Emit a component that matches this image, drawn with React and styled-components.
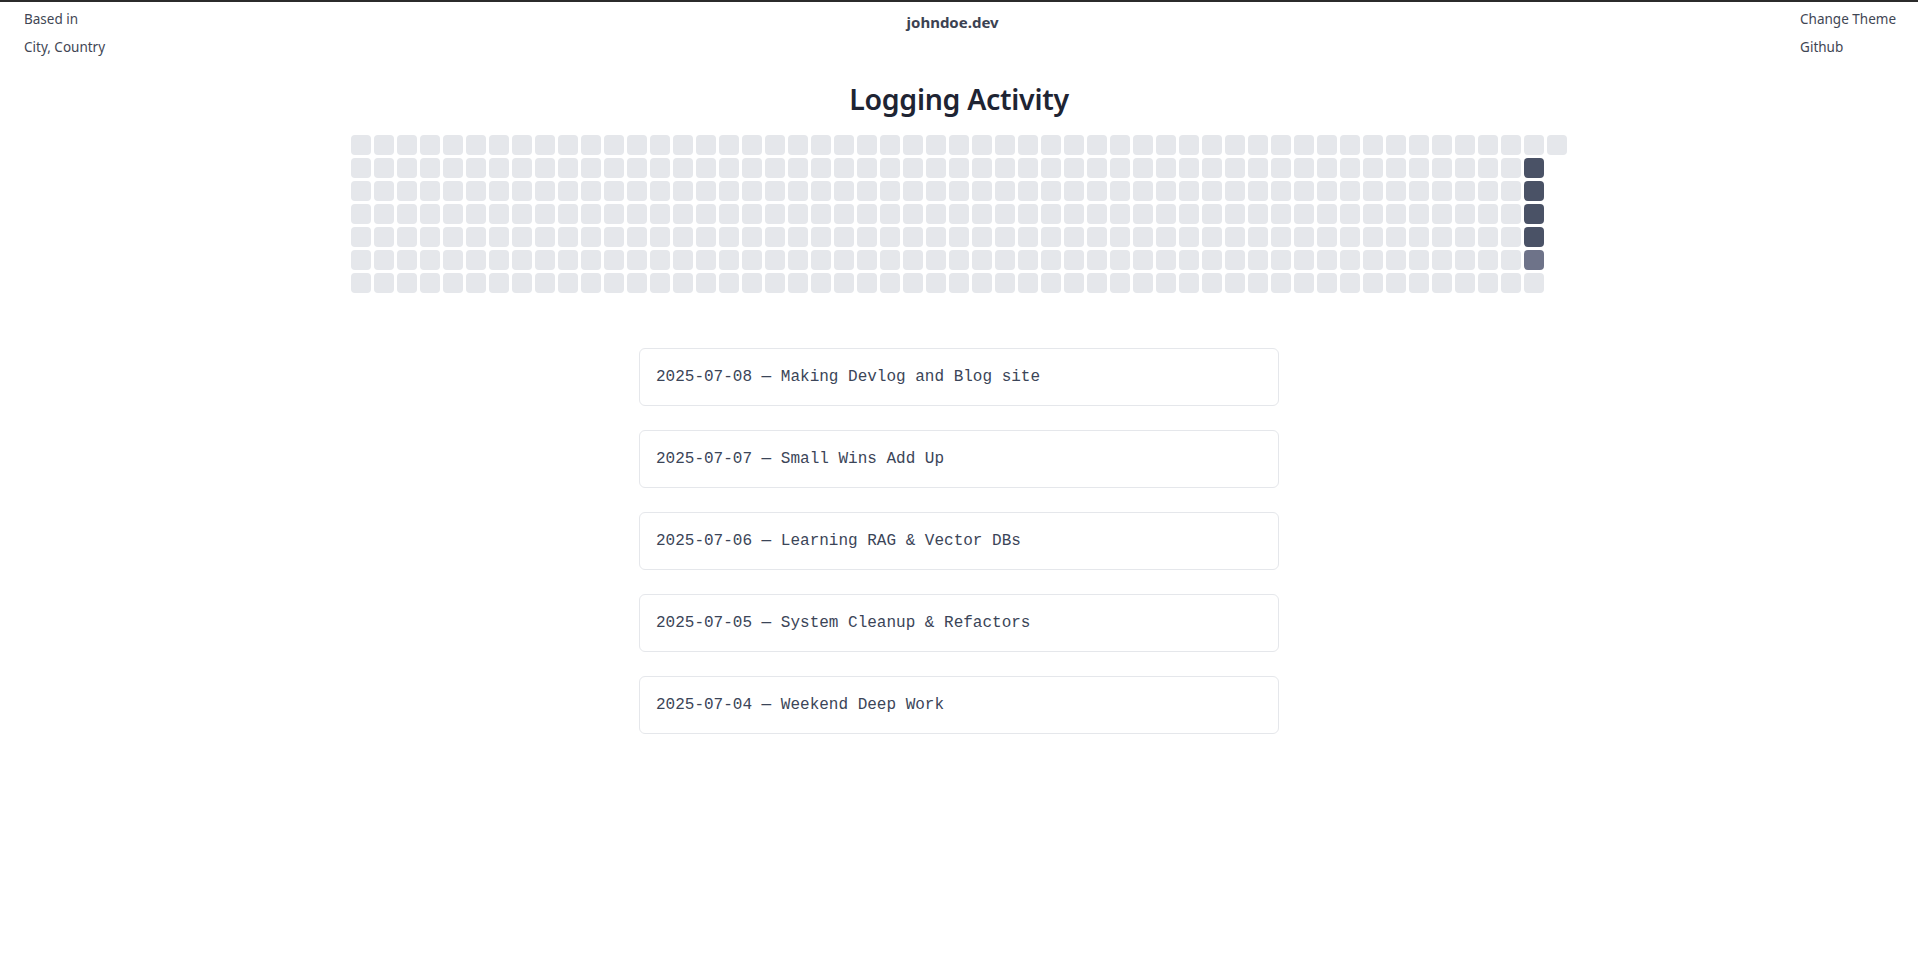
import React from "react";
import styled, { createGlobalStyle } from "styled-components";

const DAYS = 365;

// last few days have some logged work
const activity = { 358: 3, 359: 3, 360: 3, 361: 3, 362: 2 };

const logs = [
  { date: "2025-07-08", title: "Making Devlog and Blog site" },
  { date: "2025-07-07", title: "Small Wins Add Up" },
  { date: "2025-07-06", title: "Learning RAG & Vector DBs" },
  { date: "2025-07-05", title: "System Cleanup & Refactors" },
  { date: "2025-07-04", title: "Weekend Deep Work" },
];

const GlobalStyle = createGlobalStyle`
  html, body {
    margin: 0;
    background: #ffffff;
  }
  body {
    font-family: "Noto Sans", "Open Sans", sans-serif;
    border-top: 2px solid #2b2b2b;
  }
`;

export default function App() {
  return (
    <>
      <GlobalStyle />
      <Header>
        <Column>
          <Small>Based in</Small>
          <Small>City, Country</Small>
        </Column>
        <Brand>johndoe.dev</Brand>
        <Column>
          <Small>Change Theme</Small>
          <Small>Github</Small>
        </Column>
      </Header>
      <Main>
        <Title>Logging Activity</Title>
        <Grid>
          {Array.from({ length: DAYS }, (_, i) => (
            <Cell key={i} level={activity[i] || 0} />
          ))}
        </Grid>
        <List>
          {logs.map((log) => (
            <Card key={log.date}>
              {log.date} — {log.title}
            </Card>
          ))}
        </List>
      </Main>
    </>
  );
}

const Header = styled.header`
  display: flex;
  justify-content: space-between;
  align-items: flex-start;
  padding: 3px 22px 0 24px;
`;

const Column = styled.div`
  display: flex;
  flex-direction: column;
`;

const Small = styled.span`
  font-size: 13.5px;
  line-height: 28px;
  color: #3f4654;
`;

const Brand = styled.div`
  font-size: 15px;
  font-weight: 700;
  line-height: 40px;
  color: #3b4252;
  margin-top: -3px;
`;

const Main = styled.main`
  display: flex;
  flex-direction: column;
  align-items: center;
`;

const Title = styled.h1`
  margin: 21px 0 19px;
  font-size: 28.5px;
  font-weight: 600;
  line-height: 34px;
  color: #1e2433;
  letter-spacing: -0.3px;
`;

const Grid = styled.div`
  display: grid;
  grid-template-rows: repeat(7, 20px);
  grid-auto-flow: column;
  grid-auto-columns: 20px;
  gap: 3px;
`;

const cellColors = ["#e5e7eb", "#9aa0b2", "#6e7389", "#4a5266"];

const Cell = styled.div`
  width: 20px;
  height: 20px;
  border-radius: 4px;
  background: ${(p) => cellColors[p.level]};
`;

const List = styled.div`
  display: flex;
  flex-direction: column;
  gap: 24px;
  width: 640px;
  margin-top: 55px;
`;

const Card = styled.div`
  border: 1px solid #e5e7eb;
  border-radius: 6px;
  padding: 16px;
  font-family: "Liberation Mono", monospace;
  font-size: 16px;
  line-height: 24px;
  color: #3b4558;
`;
